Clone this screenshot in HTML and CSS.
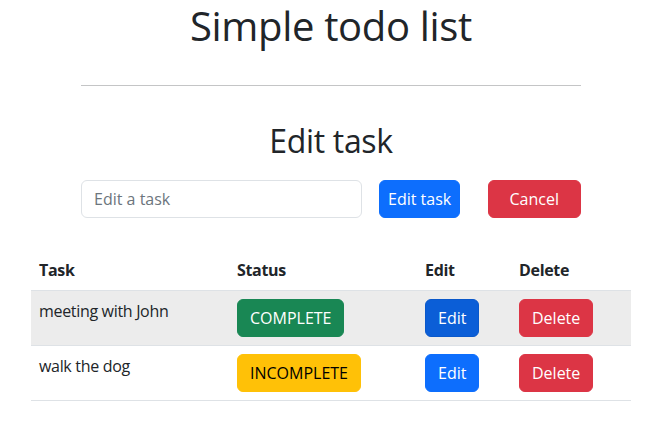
FILE: index.html
```html
<!DOCTYPE html>
<html>
<head>
<meta charset="utf-8">
<link rel="stylesheet" href="styles.css">
</head>
<body>
<div class="app">
  <h1 class="title">Simple todo list</h1>
  <hr class="rule">
  <h2 class="subtitle">Edit task</h2>
  <form class="edit-form">
    <input class="field" type="text" placeholder="Edit a task">
    <button type="button" class="btn btn-primary btn-submit">Edit task</button>
    <button type="button" class="btn btn-danger btn-cancel">Cancel</button>
  </form>
  <table class="table">
    <thead>
      <tr><th class="col-task">Task</th><th class="col-status">Status</th><th class="col-edit">Edit</th><th class="col-del">Delete</th></tr>
    </thead>
    <tbody>
      <tr class="hover">
        <td>meeting with John</td>
        <td><button class="btn btn-success">COMPLETE</button></td>
        <td><button class="btn btn-primary active">Edit</button></td>
        <td><button class="btn btn-danger">Delete</button></td>
      </tr>
      <tr>
        <td>walk the dog</td>
        <td><button class="btn btn-warning">INCOMPLETE</button></td>
        <td><button class="btn btn-primary">Edit</button></td>
        <td><button class="btn btn-danger">Delete</button></td>
      </tr>
    </tbody>
  </table>
</div>
</body>
</html>
```
FILE: styles.css
```css
* { box-sizing: border-box; }
body {
  margin: 0;
  font-family: "Open Sans", "Noto Sans", sans-serif;
  font-size: 16px;
  line-height: 1.5;
  letter-spacing: -0.02em;
  color: #212529;
  background: #fff;
}
.app {
  width: 600px;
  margin-left: 31px;
  padding-top: 2px;
}
.title {
  margin: 0;
  text-align: center;
  font-size: 40px;
  font-weight: 400;
  line-height: 1.2;
}
.rule {
  width: 500px;
  margin: 35px auto 36px;
  border: 0;
  border-top: 1px solid #c4c5c6;
  height: 0;
}
.subtitle {
  margin: 0 0 20px;
  text-align: center;
  font-size: 32px;
  font-weight: 400;
  line-height: 1.2;
}
.edit-form {
  width: 500px;
  margin: 0 auto 32px;
  display: flex;
  align-items: center;
}
.field {
  width: 281px;
  height: 38px;
  padding: 6px 12px;
  border: 1px solid #dee2e6;
  border-radius: 6px;
  font: inherit;
  color: #212529;
  margin-right: 17px;
}
.field::placeholder { color: #6c757d; }
.btn {
  display: inline-block;
  height: 38px;
  padding: 6px 12px;
  border: 1px solid transparent;
  border-radius: 6px;
  font: inherit;
  line-height: 24px;
  color: #fff;
  cursor: pointer;
}
.btn-submit { padding: 6px 8px; }
.btn-cancel { margin-left: auto; padding: 6px 21px; }
.btn-primary { background: #0d6efd; border-color: #0d6efd; }
.btn-primary.active { background: #0b5ed7; border-color: #0a58ca; }
.btn-danger { background: #dc3545; border-color: #dc3545; }
.btn-success { background: #198754; border-color: #198754; }
.btn-warning { background: #ffc107; border-color: #ffc107; color: #000; }
.table {
  width: 600px;
  border-collapse: collapse;
  table-layout: fixed;
}
.col-task { width: 198px; }
.col-status { width: 188px; }
.col-edit { width: 94px; }
.col-del { width: 120px; }
.table th, .table td {
  padding: 8px;
  text-align: left;
  vertical-align: top;
  border-bottom: 1px solid #dee2e6;
  white-space: nowrap;
}
.table th { font-weight: 700; }
.table tr.hover td { background: #ececec; }
```
